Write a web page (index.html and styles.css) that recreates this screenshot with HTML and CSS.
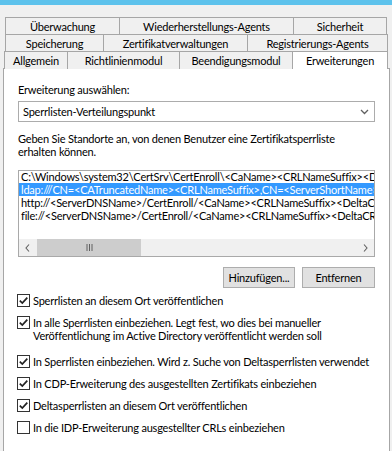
FILE: index.html
```html
<!DOCTYPE html>
<html lang="de">
<head>
  <meta charset="UTF-8" />
  <title>Erweiterungen</title>
  <link rel="stylesheet" href="styles.css">
</head>
<body>
  <div class="titlebar"></div>
  <div class="dialog">
    <div class="tabs">
      <div class="tab-row row-1">
        <div class="tab">Überwachung</div>
        <div class="tab">Wiederherstellungs-Agents</div>
        <div class="tab">Sicherheit</div>
      </div>
      <div class="tab-row row-2">
        <div class="tab">Speicherung</div>
        <div class="tab">Zertifikatverwaltungen</div>
        <div class="tab">Registrierungs-Agents</div>
      </div>
      <div class="tab-row row-3">
        <div class="tab">Allgemein</div>
        <div class="tab">Richtlinienmodul</div>
        <div class="tab">Beendigungsmodul</div>
        <div class="tab selected">Erweiterungen</div>
      </div>
    </div>

    <div class="panel">
      <label class="label">Erweiterung auswählen:</label>
      <div class="select">
        <span>Sperrlisten-Verteilungspunkt</span>
        <svg class="chevron" width="9" height="6" viewBox="0 0 9 6"><polyline points="1,1 4.5,4.5 8,1" fill="none" stroke="#606060" stroke-width="1.3"/></svg>
      </div>

      <p class="hint">Geben Sie Standorte an, von denen Benutzer eine Zertifikatsperrliste erhalten können.</p>

      <div class="listbox">
        <ul class="items">
          <li>C:\Windows\system32\CertSrv\CertEnroll\&lt;CaName&gt;&lt;CRLNameSuffix&gt;&lt;DeltaCRLAllowed&gt;.crl</li>
          <li class="active">ldap:///CN=&lt;CATruncatedName&gt;&lt;CRLNameSuffix&gt;,CN=&lt;ServerShortName&gt;,CN=CDP</li>
          <li>http://&lt;ServerDNSName&gt;/CertEnroll/&lt;CaName&gt;&lt;CRLNameSuffix&gt;&lt;DeltaCRLAllowed&gt;.crl</li>
          <li>file://&lt;ServerDNSName&gt;/CertEnroll/&lt;CaName&gt;&lt;CRLNameSuffix&gt;&lt;DeltaCRLAllowed&gt;.crl</li>
        </ul>
        <div class="hscroll">
          <div class="arrow">
            <svg width="5" height="8" viewBox="0 0 5 8"><polyline points="4,0.5 1,4 4,7.5" fill="none" stroke="#606060" stroke-width="1.1"/></svg>
          </div>
          <div class="thumb">
            <svg width="7" height="7" viewBox="0 0 7 7"><path d="M1 0v7M3.5 0v7M6 0v7" stroke="#606060" stroke-width="1"/></svg>
          </div>
          <div class="track"></div>
          <div class="arrow">
            <svg width="5" height="8" viewBox="0 0 5 8"><polyline points="1,0.5 4,4 1,7.5" fill="none" stroke="#606060" stroke-width="1.1"/></svg>
          </div>
        </div>
      </div>

      <div class="actions">
        <button class="btn">Hinzufügen...</button>
        <button class="btn">Entfernen</button>
      </div>

      <div class="checks">
        <div class="check">
          <span class="box on"></span>
          <span>Sperrlisten an diesem Ort veröffentlichen</span>
        </div>
        <div class="check wide">
          <span class="box on"></span>
          <span>In alle Sperrlisten einbeziehen. Legt fest, wo dies bei manueller<br>Veröffentlichung im Active Directory veröffentlicht werden soll</span>
        </div>
        <div class="check">
          <span class="box on"></span>
          <span>In Sperrlisten einbeziehen. Wird z. Suche von Deltasperrlisten verwendet</span>
        </div>
        <div class="check">
          <span class="box on"></span>
          <span>In CDP-Erweiterung des ausgestellten Zertifikats einbeziehen</span>
        </div>
        <div class="check">
          <span class="box on"></span>
          <span>Deltasperrlisten an diesem Ort veröffentlichen</span>
        </div>
        <div class="check">
          <span class="box"></span>
          <span>In die IDP-Erweiterung ausgestellter CRLs einbeziehen</span>
        </div>
      </div>
    </div>
  </div>
</body>
</html>
```

FILE: styles.css
```css
*, *::before, *::after { box-sizing: border-box; }

body {
  margin: 0;
  width: 392px;
  height: 451px;
  overflow: hidden;
  background: #f0f0f0;
  color: #000;
  font-family: Lato, "Noto Sans", sans-serif;
  font-size: 11px;
  letter-spacing: -0.2px;
}

.titlebar {
  height: 5px;
  background: #5dc2ec;
}

.dialog {
  padding-top: 12px;
}

/* tab rows */
.tab-row {
  display: grid;
  height: 17px;
}

.row-1 { grid-template-columns: 114px 174px 94px; margin-left: 5px; }
.row-2 { grid-template-columns: 98px 144px 141px; margin-left: 5px; }
.row-3 { grid-template-columns: 63px 112px 113px 96px; margin-left: 4px; }

.tab {
  border-top: 1px solid #a6a6a6;
  border-left: 1px solid #a6a6a6;
  background: #f0f0f0;
  text-align: center;
  line-height: 18px;
  white-space: nowrap;
  overflow: hidden;
}

.tab:last-child {
  border-right: 1px solid #a6a6a6;
}

.tab.selected {
  position: relative;
  z-index: 1;
  height: 18px;
  align-self: start;
  background: #fff;
  line-height: 17px;
}

/* page body */
.panel {
  margin-left: 3px;
  width: 387px;
  height: 400px;
  padding: 14px 14px 0 14px;
  border: 1px solid #a6a6a6;
  background: #fff;
}

.label {
  display: block;
  line-height: 13px;
}

.select {
  display: flex;
  align-items: center;
  justify-content: space-between;
  height: 21px;
  margin-top: 5px;
  padding: 0 5px 0 4px;
  border: 1px solid #acacac;
}

.hint {
  margin: 10px 0 0;
  line-height: 13px;
}

.listbox {
  height: 87px;
  margin-top: 12px;
  border: 1px solid #a9a9a9;
  overflow: hidden;
}

.items {
  list-style: none;
  margin: 0;
  padding: 0;
  height: 68px;
  overflow: hidden;
}

.items li {
  height: 13px;
  line-height: 13px;
  padding-left: 2px;
  white-space: nowrap;
  overflow: hidden;
}

.items li:first-child {
  height: 12px;
  line-height: 12px;
}

.items li.active {
  background: #3399ff;
  color: #fff;
}

.hscroll {
  display: flex;
  height: 17px;
  background: #f0f0f0;
}

.arrow {
  width: 17px;
  display: flex;
  align-items: center;
  justify-content: center;
}

.thumb {
  width: 104px;
  margin-left: 1px;
  display: flex;
  align-items: center;
  justify-content: center;
  background: #cdcdcd;
}

.track {
  flex: 1;
}

.actions {
  display: flex;
  justify-content: flex-end;
  gap: 7px;
  margin-top: 10px;
}

.btn {
  width: 73px;
  height: 21px;
  padding: 0;
  border: 1px solid #adadad;
  background: #e1e1e1;
  color: #000;
  font: inherit;
  letter-spacing: inherit;
}

.btn:first-child {
  width: 72px;
}

/* checkboxes */
.checks {
  margin-top: 6px;
}

.check {
  display: flex;
  gap: 3px;
  margin-left: -1px;
  margin-bottom: 9px;
  line-height: 13px;
  white-space: nowrap;
}

.check.wide {
  margin-bottom: 13px;
}

.box {
  flex: none;
  width: 13px;
  height: 13px;
  border: 1px solid #333;
  background: #fff;
}

.box.on {
  background: #fff url("data:image/svg+xml,%3Csvg xmlns='http://www.w3.org/2000/svg' width='11' height='11'%3E%3Cpolyline points='1.8,5.6 4.3,8.1 9.3,2.6' fill='none' stroke='%23222' stroke-width='1.7'/%3E%3C/svg%3E") no-repeat center;
}
```
